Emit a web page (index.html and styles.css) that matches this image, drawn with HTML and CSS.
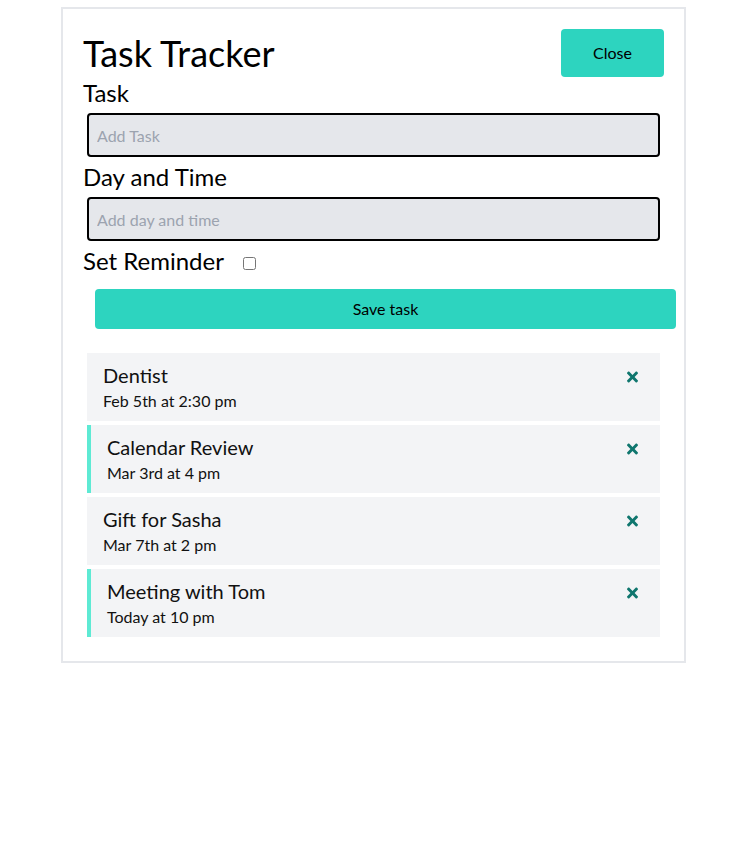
FILE: index.html
```html
<!DOCTYPE html>
<html lang="en">
<head>
    <meta charset="UTF-8">
    <meta name="viewport" content="width=device-width, initial-scale=1.0">
    <title>Task Tracker</title>
    <link rel="stylesheet" href="styles.css">
</head>
<body>
    <div class="container">
        <header class="header">
            <h1>Task Tracker</h1>
            <button class="btn">Close</button>
        </header>

        <form class="add-form">
            <div class="form-control">
                <label>Task</label>
                <input type="text" placeholder="Add Task">
            </div>
            <div class="form-control">
                <label>Day and Time</label>
                <input type="text" placeholder="Add day and time">
            </div>
            <div class="form-control-check">
                <label>Set Reminder</label>
                <input type="checkbox">
            </div>
            <input type="submit" value="Save task" class="btn btn-block">
        </form>

        <div class="tasks">
            <div class="task">
                <h3>Dentist
                    <svg class="del" viewBox="0 0 352 512"><path d="M242.72 256l100.07-100.07c12.28-12.28 12.28-32.19 0-44.48l-22.24-22.24c-12.280-12.280-32.190-12.280-44.480 0L176 189.28 75.93 89.21c-12.28-12.28-32.19-12.28-44.48 0L9.21 111.45c-12.28 12.28-12.28 32.19 0 44.48L109.28 256 9.21 356.07c-12.28 12.28-12.28 32.19 0 44.48l22.24 22.24c12.28 12.28 32.2 12.28 44.48 0L176 322.72l100.07 100.07c12.28 12.28 32.2 12.28 44.48 0l22.24-22.24c12.28-12.28 12.28-32.19 0-44.48L242.72 256z"/></svg>
                </h3>
                <p>Feb 5th at 2:30 pm</p>
            </div>
            <div class="task reminder">
                <h3>Calendar Review
                    <svg class="del" viewBox="0 0 352 512"><path d="M242.72 256l100.07-100.07c12.28-12.28 12.28-32.19 0-44.48l-22.24-22.24c-12.280-12.280-32.190-12.280-44.480 0L176 189.28 75.93 89.21c-12.28-12.28-32.19-12.28-44.48 0L9.21 111.45c-12.28 12.28-12.28 32.19 0 44.48L109.28 256 9.21 356.07c-12.28 12.28-12.28 32.19 0 44.48l22.24 22.24c12.28 12.28 32.2 12.28 44.48 0L176 322.72l100.07 100.07c12.28 12.28 32.2 12.28 44.48 0l22.24-22.24c12.28-12.28 12.28-32.19 0-44.48L242.72 256z"/></svg>
                </h3>
                <p>Mar 3rd at 4 pm</p>
            </div>
            <div class="task">
                <h3>Gift for Sasha
                    <svg class="del" viewBox="0 0 352 512"><path d="M242.72 256l100.07-100.07c12.28-12.28 12.28-32.19 0-44.48l-22.24-22.24c-12.280-12.280-32.190-12.280-44.480 0L176 189.28 75.93 89.21c-12.28-12.28-32.19-12.28-44.48 0L9.21 111.45c-12.28 12.28-12.28 32.19 0 44.48L109.28 256 9.21 356.07c-12.28 12.28-12.28 32.19 0 44.48l22.24 22.24c12.28 12.28 32.2 12.28 44.48 0L176 322.72l100.07 100.07c12.28 12.28 32.2 12.28 44.48 0l22.24-22.24c12.28-12.28 12.28-32.19 0-44.48L242.72 256z"/></svg>
                </h3>
                <p>Mar 7th at 2 pm</p>
            </div>
            <div class="task reminder">
                <h3>Meeting with Tom
                    <svg class="del" viewBox="0 0 352 512"><path d="M242.72 256l100.07-100.07c12.28-12.28 12.28-32.19 0-44.48l-22.24-22.24c-12.280-12.280-32.190-12.280-44.480 0L176 189.28 75.93 89.21c-12.28-12.28-32.19-12.28-44.48 0L9.21 111.45c-12.28 12.28-12.28 32.19 0 44.48L109.28 256 9.21 356.07c-12.28 12.28-12.28 32.19 0 44.48l22.24 22.24c12.28 12.28 32.2 12.28 44.48 0L176 322.72l100.07 100.07c12.28 12.28 32.2 12.28 44.48 0l22.24-22.24c12.28-12.28 12.28-32.19 0-44.48L242.72 256z"/></svg>
                </h3>
                <p>Today at 10 pm</p>
            </div>
        </div>
    </div>
</body>
</html>
```

FILE: styles.css
```css
* {
    margin: 0;
    padding: 0;
    box-sizing: border-box;
    font-family: Lato, "Open Sans", sans-serif;
}

body {
    background: #fff;
    color: #000;
}

.container {
    width: 625px;
    margin: 7px auto 0;
    border: 2px solid #e5e7eb;
    padding: 20px;
}

.header {
    display: flex;
    justify-content: space-between;
    align-items: center;
}

.header h1 {
    font-size: 36px;
    line-height: 40px;
    font-weight: 400;
}

.btn {
    background: #2dd4bf;
    border: none;
    border-radius: 4px;
    color: #000;
    font-size: 16px;
    line-height: 24px;
    width: 103px;
    height: 48px;
    cursor: pointer;
}

.form-control label {
    display: block;
    font-size: 24px;
    line-height: 32px;
}

.form-control input {
    display: block;
    width: calc(100% - 8px);
    margin: 4px;
    height: 44px;
    padding: 8px;
    font-size: 16px;
    line-height: 24px;
    background: #e5e7eb;
    border: 2px solid #000;
    border-radius: 4px;
}

.form-control input::placeholder {
    color: #9ca3af;
}

.form-control-check {
    display: flex;
    align-items: center;
    height: 32px;
}

.form-control-check label {
    font-size: 24px;
    line-height: 32px;
}

.form-control-check input {
    width: 13px;
    height: 13px;
    margin: 4px 0 0 19px;
}

.btn-block {
    display: block;
    width: 100%;
    height: 40px;
    margin: 12px 0 0 12px;
}

.tasks {
    margin-top: 24px;
}

.task {
    background: #f3f4f6;
    margin: 4px;
    padding: 8px 16px;
}

.task.reminder {
    border-left: 4px solid #5eead4;
}

.task h3 {
    display: flex;
    justify-content: space-between;
    align-items: center;
    font-size: 20px;
    line-height: 28px;
    font-weight: 400;
    color: #111;
}

.task p {
    font-size: 16px;
    line-height: 24px;
    color: #111;
}

.del {
    width: 11px;
    height: 16px;
    margin: 4px 6px 0 0;
    fill: #0f766e;
    cursor: pointer;
}
```
